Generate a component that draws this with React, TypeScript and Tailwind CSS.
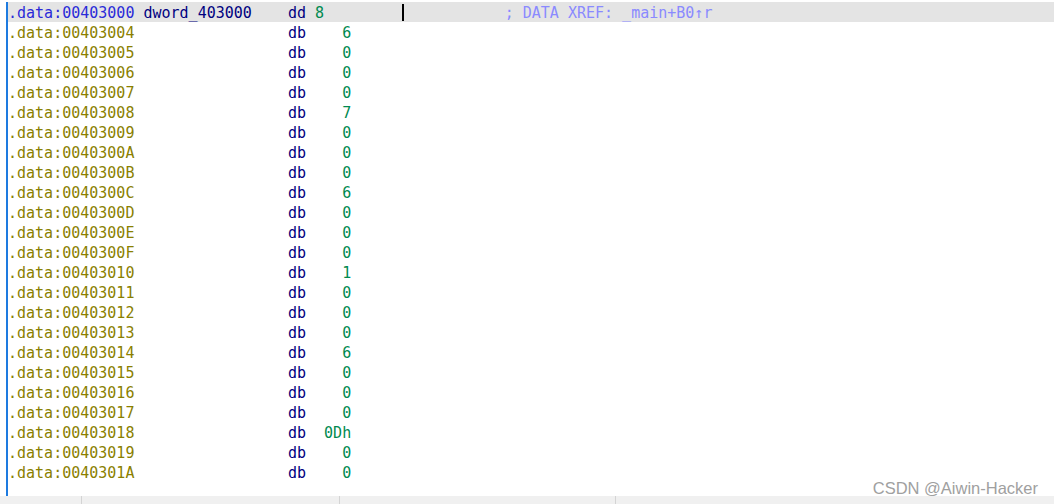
import React from "react";

const rows: [string, string][] = [
  ["00403004", "6"],
  ["00403005", "0"],
  ["00403006", "0"],
  ["00403007", "0"],
  ["00403008", "7"],
  ["00403009", "0"],
  ["0040300A", "0"],
  ["0040300B", "0"],
  ["0040300C", "6"],
  ["0040300D", "0"],
  ["0040300E", "0"],
  ["0040300F", "0"],
  ["00403010", "1"],
  ["00403011", "0"],
  ["00403012", "0"],
  ["00403013", "0"],
  ["00403014", "6"],
  ["00403015", "0"],
  ["00403016", "0"],
  ["00403017", "0"],
  ["00403018", "0Dh"],
  ["00403019", "0"],
  ["0040301A", "0"],
];

export default function App() {
  return (
    <div
      className="relative w-[1054px] h-[504px] overflow-hidden bg-white flex flex-col"
      style={{ fontFamily: '"DejaVu Sans Mono", "Liberation Mono", monospace' }}
    >
      <div className="flex-1 flex flex-col pt-[2px] pl-[6px]">
        <div className="flex-1 border-l-2 border-[#1e7be0] flex flex-col">
          {/* highlighted first row */}
          <div className="relative h-[20px] bg-[#e4e4e4] text-[15px] leading-[22px] whitespace-pre">
            <span className="text-[#2a2ad8]">.data:00403000</span>
            <span className="text-[#000080]"> dword_403000    </span>
            <span className="text-[#000080]">dd </span>
            <span className="text-[#008a50]">8</span>
            <span>{" ".repeat(20)}</span>
            <span className="text-[#8a8aff]">; DATA XREF: _main+B0↑r</span>
            <span className="absolute left-[394px] top-[2px] w-[2px] h-[17px] bg-black" />
          </div>
          {rows.map(([a, v]) => (
            <div
              key={a}
              className="h-[20px] text-[15px] leading-[22px] whitespace-pre"
            >
              <span className="text-[#8a8000]">.data:{a}</span>
              <span>{" ".repeat(17)}</span>
              <span className="text-[#000080]">db</span>
              <span className="text-[#008a50]">{v.padStart(5)}</span>
            </div>
          ))}
        </div>
      </div>
      {/* status bar (clipped at the window edge) */}
      <div className="h-[8px] bg-[#f0f0f0] overflow-hidden flex text-[15px] leading-[20px] whitespace-pre text-black">
        <div className="w-[82px] pl-[10px] pt-[6px] border-r border-[#d4d4d4]">00000000</div>
        <div className="w-[258px] pl-[8px] pt-[6px] border-r border-[#d4d4d4]">00403000: .data:dword_403000</div>
        <div className="w-[276px] pl-[6px] pt-[6px] border-r border-[#d4d4d4]">(Synchronized with Hex View-1)</div>
        <div className="flex-1" />
      </div>
      <div
        className="absolute right-[16px] bottom-[6px] text-[16.5px] leading-[20px] text-[#a0a0a0]"
        style={{ fontFamily: '"Liberation Sans", Arial, sans-serif' }}
      >
        CSDN @Aiwin-Hacker
      </div>
    </div>
  );
}
